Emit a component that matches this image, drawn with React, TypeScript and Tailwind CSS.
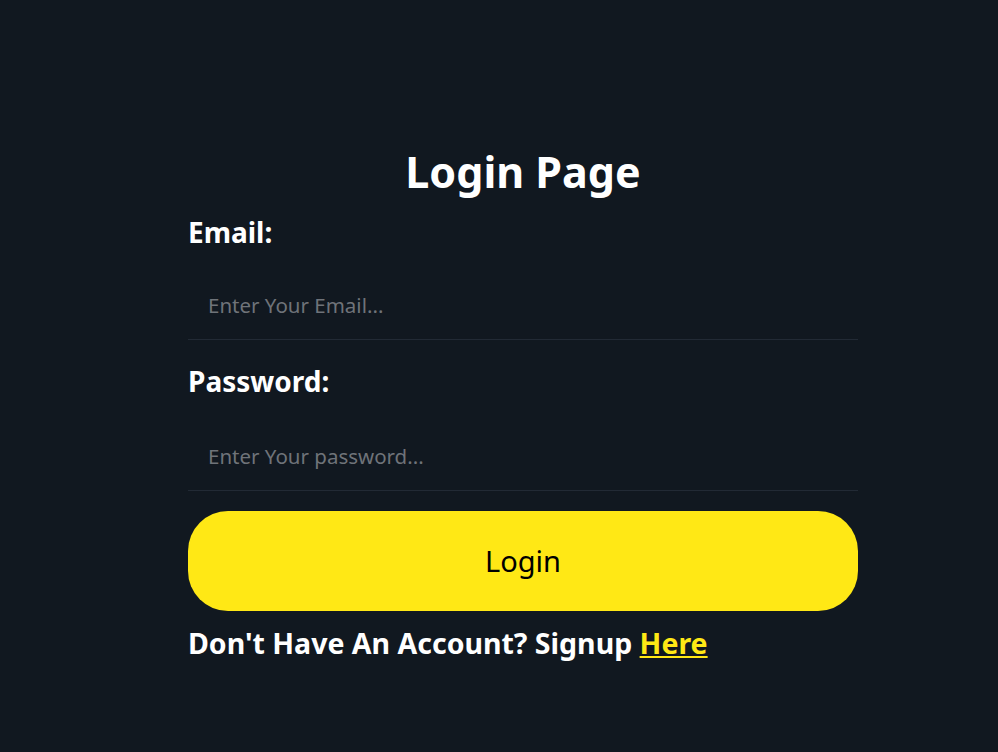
import { useState } from "react";

export default function App() {
  const [email, setEmail] = useState("");
  const [password, setPassword] = useState("");

  return (
    <div
      className="min-h-[752px] w-full bg-[#111820] text-white"
      style={{ fontFamily: '"Noto Sans", "Open Sans", sans-serif' }}
    >
      <div className="ml-[188px] flex w-[670px] flex-col pt-[140px]">
        <h1 className="text-center text-[43px] font-bold leading-[64px]">Login Page</h1>

        <label className="mt-[10px] text-[28px] font-bold leading-[36px]">Email:</label>
        <input
          type="email"
          value={email}
          onChange={(e) => setEmail(e.target.value)}
          placeholder="Enter Your Email..."
          className="mt-[20px] h-[70px] border-b border-[#222a35] bg-transparent px-5 text-[20.5px] text-white placeholder:text-[#6f7379] outline-none"
        />

        <label className="mt-[23px] text-[28px] font-bold leading-[36px]">Password:</label>
        <input
          type="password"
          value={password}
          onChange={(e) => setPassword(e.target.value)}
          placeholder="Enter Your password..."
          className="mt-[22px] h-[70px] border-b border-[#222a35] bg-transparent px-5 text-[20.5px] text-white placeholder:text-[#6f7379] outline-none"
        />

        <button className="mt-[20px] h-[100px] rounded-[40px] bg-[#ffe815] text-[29px] text-black">
          Login
        </button>

        <p className="mt-[12px] text-[28.5px] font-bold leading-[40px]">
          Don't Have An Account? Signup{" "}
          <a href="#" className="text-[#ffe815] underline">
            Here
          </a>
        </p>
      </div>
    </div>
  );
}
